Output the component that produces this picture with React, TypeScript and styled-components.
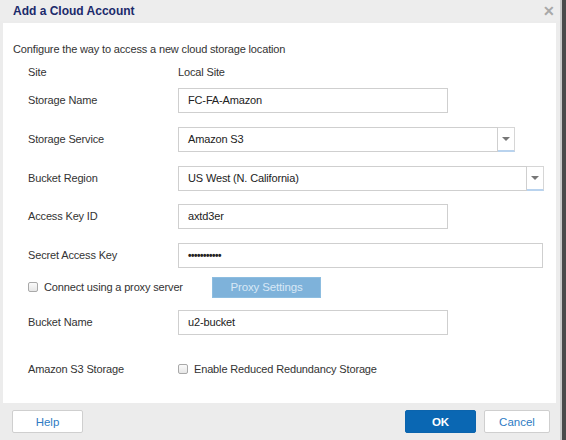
import React from "react";
import styled, { createGlobalStyle } from "styled-components";

const Global = createGlobalStyle`
  html, body { margin: 0; padding: 0; background: #ececec; }
  body { font-family: "Liberation Sans", Arial, sans-serif; }
  * { box-sizing: border-box; }
`;

const Frame = styled.div`
  width: 566px;
  height: 440px;
  display: flex;
  overflow: hidden;
`;

const Dialog = styled.div`
  width: 560px;
  height: 440px;
  display: flex;
  flex-direction: column;
  background: #ececec;
`;

const Edge = styled.div`
  width: 6px;
  height: 440px;
  background: linear-gradient(to right, #c9c9c9 0, #c9c9c9 2px, #4a4a4a 2px, #4a4a4a 100%);
`;

const Header = styled.div`
  height: 21px;
  display: flex;
  align-items: center;
  justify-content: space-between;
  padding: 0 5px 0 13px;
  background: #ededed;
`;

const Title = styled.div`
  font-size: 12px;
  font-weight: bold;
  color: #1b2a6b;
`;

const Close = styled.div`
  font-size: 14px;
  color: #a8a8a8;
  font-weight: bold;
  line-height: 1;
`;

const Body = styled.div`
  flex: 1;
  margin: 2px 4px 0 3px;
  background: #fff;
  padding: 19px 10px 0 10px;
  color: #333;
  font-size: 11px;
  letter-spacing: -0.15px;
`;

const Intro = styled.div`
  height: 14px;
  line-height: 14px;
`;

const Form = styled.div`
  padding: 5px 0 0 15px;
  display: flex;
  flex-direction: column;
`;

const Row = styled.div<{ $h: number }>`
  height: ${(p) => p.$h}px;
  display: flex;
  align-items: center;
`;

const Label = styled.div`
  width: 150px;
  flex-shrink: 0;
`;

const Input = styled.div<{ $w: number }>`
  width: ${(p) => p.$w}px;
  height: 25px;
  border: 1px solid #cfcfcf;
  padding: 0 9px;
  display: flex;
  align-items: center;
  background: #fff;
  color: #222;
`;

const Select = styled.div`
  display: flex;
  height: 25px;
`;

const DropButton = styled.div`
  width: 17px;
  height: 25px;
  border: 1px solid #d6d6d6;
  border-left: none;
  border-bottom: 2px solid #b9d3ee;
  display: flex;
  align-items: center;
  justify-content: center;
`;

const Caret = styled.div`
  width: 0;
  height: 0;
  border-left: 4px solid transparent;
  border-right: 4px solid transparent;
  border-top: 4px solid #777;
`;

const Check = styled.div`
  width: 10px;
  height: 10px;
  border: 1px solid #a9a9a9;
  border-radius: 2px;
  background: linear-gradient(#fafafa, #e6e6e6);
  margin-right: 6px;
  flex-shrink: 0;
`;

const ProxyLabel = styled.div`
  display: flex;
  align-items: center;
  width: 184px;
`;

const ProxyButton = styled.div`
  width: 109px;
  height: 21px;
  background: #7eb2da;
  color: #d8e8f6;
  font-size: 11.5px;
  display: flex;
  align-items: center;
  justify-content: center;
  border: 1px solid #8dbde0;
`;

const Dots = styled.span`
  letter-spacing: -0.5px;
  font-size: 10px;
  font-weight: bold;
`;

const Footer = styled.div`
  height: 37px;
  display: flex;
  align-items: center;
  padding: 0 10px 0 12px;
`;

const Button = styled.div<{ $w: number; $primary?: boolean }>`
  width: ${(p) => p.$w}px;
  height: 23px;
  display: flex;
  align-items: center;
  justify-content: center;
  font-size: 11.5px;
  border: 1px solid ${(p) => (p.$primary ? "#0b64ad" : "#cfcfcf")};
  background: ${(p) => (p.$primary ? "#0a67b3" : "#fff")};
  color: ${(p) => (p.$primary ? "#fff" : "#2e7bc4")};
  font-weight: ${(p) => (p.$primary ? "bold" : "normal")};
  border-radius: 2px;
`;

const Spacer = styled.div`
  flex: 1;
`;

const Gap = styled.div`
  width: 8px;
`;

export default function App() {
  return (
    <>
      <Global />
      <Frame>
        <Dialog>
          <Header>
            <Title>Add a Cloud Account</Title>
            <Close>✕</Close>
          </Header>
          <Body>
            <Intro>Configure the way to access a new cloud storage location</Intro>
            <Form>
              <Row $h={22}>
                <Label>Site</Label>
                <div>Local Site</div>
              </Row>
              <Row $h={34}>
                <Label>Storage Name</Label>
                <Input $w={270}>FC-FA-Amazon</Input>
              </Row>
              <Row $h={44}>
                <Label>Storage Service</Label>
                <Select>
                  <Input $w={320}>Amazon S3</Input>
                  <DropButton><Caret /></DropButton>
                </Select>
              </Row>
              <Row $h={34}>
                <Label>Bucket Region</Label>
                <Select>
                  <Input $w={349}>US West (N. California)</Input>
                  <DropButton><Caret /></DropButton>
                </Select>
              </Row>
              <Row $h={42}>
                <Label>Access Key ID</Label>
                <Input $w={270}>axtd3er</Input>
              </Row>
              <Row $h={36}>
                <Label>Secret Access Key</Label>
                <Input $w={365}><Dots>•••••••••••</Dots></Input>
              </Row>
              <Row $h={28}>
                <ProxyLabel>
                  <Check />
                  <span>Connect using a proxy server</span>
                </ProxyLabel>
                <ProxyButton>Proxy Settings</ProxyButton>
              </Row>
              <Row $h={42}>
                <Label>Bucket Name</Label>
                <Input $w={270}>u2-bucket</Input>
              </Row>
              <Row $h={52}>
                <Label>Amazon S3 Storage</Label>
                <Check />
                <span>Enable Reduced Redundancy Storage</span>
              </Row>
            </Form>
          </Body>
          <Footer>
            <Button $w={71}>Help</Button>
            <Spacer />
            <Button $w={71} $primary>OK</Button>
            <Gap />
            <Button $w={66}>Cancel</Button>
          </Footer>
        </Dialog>
        <Edge />
      </Frame>
    </>
  );
}
